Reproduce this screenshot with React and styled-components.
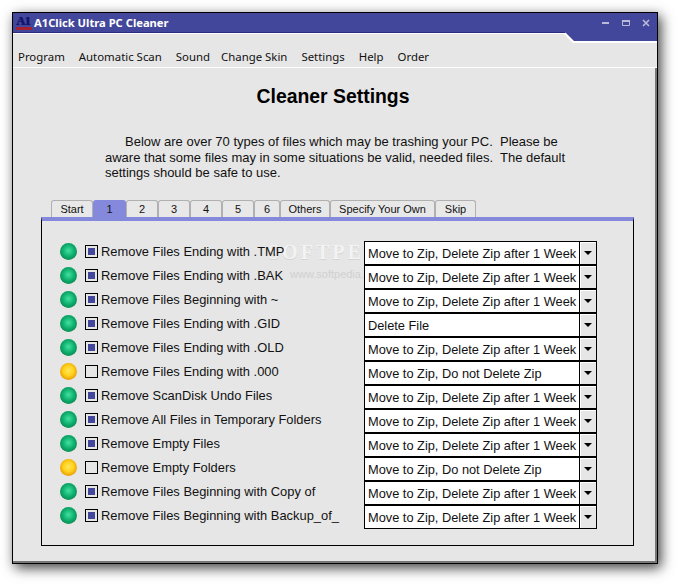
import React from 'react';
import styled, { createGlobalStyle } from 'styled-components';

const GlobalStyle = createGlobalStyle`
  html, body {
    margin: 0;
    padding: 0;
    background: #fff;
  }
`;

const Page = styled.div`
  width: 678px;
  height: 584px;
  padding: 12px 0 0 12px;
  box-sizing: border-box;
  overflow: hidden;
`;

const Window = styled.div`
  width: 646px;
  height: 552px;
  box-sizing: border-box;
  border: 1px solid #000;
  background: #43479b;
  box-shadow: 3px 4px 12px rgba(0, 0, 0, 0.75);
  display: flex;
  flex-direction: column;
`;

const TitleBar = styled.div`
  height: 19px;
  display: flex;
  align-items: center;
  padding: 0 7px 0 3px;
  flex-shrink: 0;
`;

const Logo = styled.span`
  width: 16px;
  height: 15px;
  margin-right: 2px;
  font: bold 12px/12px "Liberation Serif", serif;
  letter-spacing: -0.5px;
  color: #14146e;
  border-bottom: 3px solid #a52030;
  box-sizing: border-box;
  text-shadow: 1px 0 0 #14146e;
`;

const Title = styled.span`
  font: bold 11.2px "Noto Sans", sans-serif;
  color: #fff;
  flex: 1;
`;

const WinButtons = styled.div`
  display: flex;
  gap: 12px;
  align-items: center;
  color: #b9bbd8;
`;

const Frame = styled.div`
  flex: 1;
  background: #fff;
  clip-path: polygon(0 0, 552px 0, 561px 9px, 100% 9px, 100% 100%, 0 100%);
  border-top: 1px solid #2a2d7f;
  display: flex;
  flex-direction: column;
  min-height: 0;
`;

const Surface = styled.div`
  flex: 1;
  margin-top: 1px;
  background: #e6e6e6;
  clip-path: polygon(0 0, 551px 0, 560px 9px, 100% 9px, 100% 100%, 0 100%);
  display: flex;
  flex-direction: column;
  min-height: 0;
`;

const MenuBar = styled.div`
  height: 34px;
  padding: 15px 0 0 5px;
  box-sizing: border-box;
  border-bottom: 1px solid #fff;
  display: flex;
  gap: 14px;
  flex-shrink: 0;
`;

const MenuItem = styled.span`
  font: 11.4px/16px "Noto Sans", sans-serif;
  color: #111;
  margin-right: ${(p) => (p.$tight ? '-3px' : '0')};
`;

const Content = styled.div`
  flex: 1;
  position: relative;
  padding: 0 0 15px 28px;
  border-right: 2px solid #777;
  border-bottom: 2px solid #777;
  display: flex;
  flex-direction: column;
  min-height: 0;
`;

const Heading = styled.h1`
  margin: 17px 0 0 -30px;
  height: 23px;
  text-align: center;
  font: bold 19.4px/23px "Liberation Sans", sans-serif;
  color: #000;
`;

const Intro = styled.p`
  margin: 26px 0 0 64px;
  height: 66px;
  font: 13px/15.5px "Liberation Sans", sans-serif;
  color: #111;
  white-space: pre;
  text-indent: 20px;
`;

const TabRow = styled.div`
  display: flex;
  height: 17px;
  margin-left: 10px;
  flex-shrink: 0;
`;

const Tab = styled.div`
  width: ${(p) => p.$w}px;
  box-sizing: border-box;
  border: 1px solid ${(p) => (p.$active ? '#8589dc' : '#b0b0b0')};
  border-bottom: none;
  border-radius: 3px 3px 0 0;
  background: ${(p) => (p.$active ? '#8589dc' : '#e8e8e8')};
  font: 11px/16px "Liberation Sans", sans-serif;
  color: #111;
  text-align: center;
`;

const Panel = styled.div`
  flex: 1;
  width: 593px;
  box-sizing: border-box;
  border: 1px solid #000;
  border-top: 4px solid #8589dc;
  padding: 20px 36px 0 18px;
  position: relative;
  min-height: 0;
`;

const Row = styled.div`
  display: flex;
  align-items: center;
  height: 24px;
`;

const Ball = styled.span`
  width: 17px;
  height: 17px;
  border-radius: 50%;
  margin: -3px 8px 0 0;
  flex-shrink: 0;
  background: ${(p) =>
    p.$warn
      ? 'radial-gradient(circle at 50% 45%, #ffe65a 0%, #ffd21e 40%, #e89a00 75%, #a86c00 100%)'
      : 'radial-gradient(circle at 50% 45%, #3fe0a0 0%, #10b070 45%, #0a8a50 75%, #0a5f38 100%)'};
`;

const Check = styled.span`
  width: 13px;
  height: 13px;
  box-sizing: border-box;
  border: 1px solid #000;
  background: #e6e6e6;
  margin: -3px 3px 0 0;
  flex-shrink: 0;
  display: flex;
  align-items: center;
  justify-content: center;
  &::after {
    content: '';
    width: 7px;
    height: 7px;
    background: ${(p) => (p.$on ? '#43479b' : 'transparent')};
  }
`;

const Label = styled.span`
  width: 263px;
  flex-shrink: 0;
  margin-top: -3px;
  font: 12.9px "Liberation Sans", sans-serif;
  color: #111;
  white-space: nowrap;
  position: relative;
  z-index: 1;
`;

const Select = styled.div`
  width: 233px;
  height: 24px;
  box-sizing: border-box;
  border: 1px solid #000;
  display: flex;
  position: relative;
  z-index: 1;
`;

const SelectValue = styled.div`
  width: 214px;
  background: #fff;
  padding-left: 3px;
  box-sizing: border-box;
  white-space: nowrap;
  font: 12.8px/23px "Liberation Sans", sans-serif;
  color: #111;
`;

const SelectArrow = styled.div`
  flex: 1;
  background: #e6e6e6;
  border-left: 1px solid #000;
  box-shadow: inset 1px 1px 0 #fff;
  display: flex;
  align-items: center;
  justify-content: center;
  &::after {
    content: '';
    border-left: 4px solid transparent;
    border-right: 4px solid transparent;
    border-top: 4px solid #000;
  }
`;

const Watermark = styled.div`
  position: absolute;
  left: 226px;
  top: 21px;
  color: #f3f3f3;
  pointer-events: none;
  font: bold 20px/20px "Liberation Serif", serif;
  letter-spacing: 3px;
  text-shadow: 0 1px 0 #d4d4d4;
`;

const WatermarkUrl = styled.div`
  font: 11px/12px "Liberation Sans", sans-serif;
  letter-spacing: 0;
  color: #d0d0d0;
  text-shadow: none;
  margin: 6px 0 0 22px;
`;

const zipWeek = 'Move to Zip, Delete Zip after 1 Week';
const zipKeep = 'Move to Zip, Do not Delete Zip';

const tabs = [
  ['Start', 42], ['1', 33], ['2', 32], ['3', 32], ['4', 32], ['5', 32],
  ['6', 26], ['Others', 50], ['Specify Your Own', 105], ['Skip', 41],
];

const rows = [
  ['Remove Files Ending with .TMP', zipWeek, true],
  ['Remove Files Ending with .BAK', zipWeek, true],
  ['Remove Files Beginning with ~', zipWeek, true],
  ['Remove Files Ending with .GID', 'Delete File', true],
  ['Remove Files Ending with .OLD', zipWeek, true],
  ['Remove Files Ending with .000', zipKeep, false],
  ['Remove ScanDisk Undo Files', zipWeek, true],
  ['Remove All Files in Temporary Folders', zipWeek, true],
  ['Remove Empty Files', zipWeek, true],
  ['Remove Empty Folders', zipKeep, false],
  ['Remove Files Beginning with Copy of', zipWeek, true],
  ['Remove Files Beginning with Backup_of_', zipWeek, true],
];

const menu = ['Program', 'Automatic Scan', 'Sound', 'Change Skin', 'Settings', 'Help', 'Order'];

function App() {
  return (
    <Page>
      <GlobalStyle />
      <Window>
        <TitleBar>
          <Logo>A1</Logo>
          <Title>A1Click Ultra PC Cleaner</Title>
          <WinButtons>
            <svg width="8" height="8" viewBox="0 0 8 8"><rect x="0" y="3" width="7" height="2" fill="currentColor" /></svg>
            <svg width="8" height="8" viewBox="0 0 8 8"><path d="M.5 1.5h7v5h-7z" fill="none" stroke="currentColor" /><path d="M0 1h8v2H0z" fill="currentColor" /></svg>
            <svg width="8" height="8" viewBox="0 0 8 8"><path d="M1 1l6 6M7 1L1 7" stroke="currentColor" strokeWidth="1.6" /></svg>
          </WinButtons>
        </TitleBar>
        <Frame>
          <Surface>
            <MenuBar>
              {menu.map((m) => <MenuItem key={m} $tight={m === 'Sound'}>{m}</MenuItem>)}
            </MenuBar>
            <Content>
              <Heading>Cleaner Settings</Heading>
              <Intro>{'Below are over 70 types of files which may be trashing your PC.  Please be\naware that some files may in some situations be valid, needed files.  The default\nsettings should be safe to use.'}</Intro>
              <TabRow>
                {tabs.map(([t, w]) => <Tab key={t} $w={w} $active={t === '1'}>{t}</Tab>)}
              </TabRow>
              <Panel>
                {rows.map(([label, action, on]) => (
                  <Row key={label}>
                    <Ball $warn={!on} />
                    <Check $on={on} />
                    <Label>{label}</Label>
                    <Select>
                      <SelectValue>{action}</SelectValue>
                      <SelectArrow />
                    </Select>
                  </Row>
                ))}
                <Watermark>
                  SOFTPEDIA
                  <WatermarkUrl>www.softpedia.com</WatermarkUrl>
                </Watermark>
              </Panel>
            </Content>
          </Surface>
        </Frame>
      </Window>
    </Page>
  );
}

export default App;
